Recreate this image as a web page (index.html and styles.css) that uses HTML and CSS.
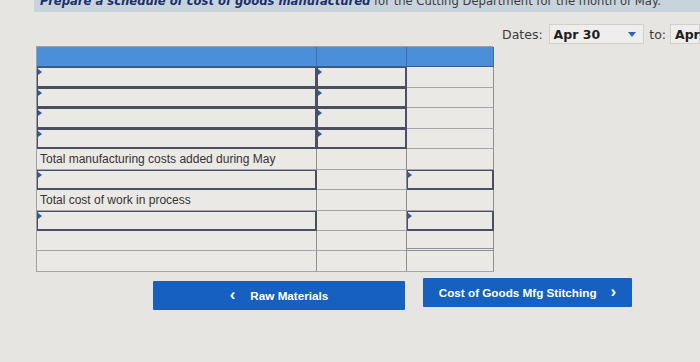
FILE: index.html
```html
<!DOCTYPE html>
<html>
<head>
<meta charset="utf-8">
<link rel="stylesheet" href="styles.css">
</head>
<body>
<div class="banner">
  <p class="prompt"><span class="em">Prepare a schedule of cost of goods manufactured</span> for the Cutting Department for the month of May.</p>
</div>
<div class="dates">
  <span class="lbl">Dates:</span>
  <div class="select"><span class="val">Apr 30</span><span class="arrow"></span></div>
  <span class="lbl to">to:</span>
  <div class="select cut"><span class="val">Apr 30</span></div>
</div>
<div class="sheet">
  <div class="c hd"></div><div class="c hd"></div><div class="c hd"></div>

  <div class="c in"></div><div class="c in"></div><div class="c"></div>
  <div class="c in"></div><div class="c in"></div><div class="c"></div>
  <div class="c in"></div><div class="c in"></div><div class="c"></div>
  <div class="c in"></div><div class="c in"></div><div class="c"></div>

  <div class="c lab">Total manufacturing costs added during May</div><div class="c"></div><div class="c"></div>
  <div class="c in"></div><div class="c"></div><div class="c in"></div>
  <div class="c lab">Total cost of work in process</div><div class="c"></div><div class="c"></div>
  <div class="c in"></div><div class="c"></div><div class="c in"></div>
  <div class="c"></div><div class="c"></div><div class="c dbl"></div>
  <div class="c"></div><div class="c"></div><div class="c"></div>
</div>
<div class="nav">
  <button class="btn prev"><span class="chev">&lsaquo;</span>Raw Materials</button>
  <button class="btn next">Cost of Goods Mfg Stitching<span class="chev">&rsaquo;</span></button>
</div>
</body>
</html>
```
FILE: styles.css
```css
html, body {
  margin: 0;
  padding: 0;
  background: #e7e5e2;
  width: 700px;
  height: 362px;
  overflow: hidden;
}

.banner {
  margin-left: 34px;
  height: 12px;
  background: #c8d4dc;
  overflow: hidden;
}

.prompt {
  margin: -7px 0 0 6px;
  font-family: "DejaVu Sans", Verdana, sans-serif;
  font-size: 11.6px;
  line-height: 16px;
  color: #3a3a3a;
  white-space: nowrap;
}

.prompt .em {
  font-weight: bold;
  font-style: italic;
  color: #1c2e6b;
}

.dates {
  display: flex;
  align-items: center;
  margin-top: 12px;
  margin-left: 502px;
  height: 20px;
  font-family: "DejaVu Sans", Verdana, sans-serif;
  font-size: 12.5px;
  color: #3a3a3a;
  white-space: nowrap;
}

.lbl { margin-right: 6px; }
.lbl.to { margin-left: 5px; margin-right: 4px; }

.select {
  display: flex;
  align-items: center;
  width: 110px;
  height: 20px;
  box-sizing: border-box;
  background: #efeeec;
  border: 1px solid #d2d0cd;
  padding-left: 4px;
}

.select .val {
  flex: 1;
  font-weight: bold;
  color: #1e1e1e;
}

.select .arrow {
  width: 0;
  height: 0;
  border-left: 4px solid transparent;
  border-right: 4px solid transparent;
  border-top: 5px solid #2f5fb0;
  margin-right: 7px;
}

.select.cut {
  width: 30px;
  flex: none;
}

.sheet {
  display: grid;
  grid-template-columns: 280px 90px 87px;
  grid-template-rows: repeat(11, 20.45px);
  margin-left: 36px;
  margin-top: 2px;
  width: 457px;
  border-top: 1px solid #9da0a5;
  border-left: 1px solid #9da0a5;
  box-sizing: border-box;
}

.c {
  border-right: 1px solid #8d9096;
  border-bottom: 1px solid #a3a5a9;
  background: #ebe9e6;
  position: relative;
  font-family: "Liberation Sans", Arial, sans-serif;
  font-size: 12px;
  color: #333;
}

.c.hd {
  background: #4b8ed9;
  border-right-color: #3d6fae;
  border-bottom-color: #3b5f8f;
}

.c.in {
  border-right: 2px solid #4a5061;
  border-bottom: 2px solid #4a5061;
  box-shadow: inset 1px 1px 0 #4a5061;
}

.c.in::before {
  content: "";
  position: absolute;
  left: 1px;
  top: 2px;
  border-top: 3px solid transparent;
  border-bottom: 3px solid transparent;
  border-left: 4px solid #2c5aa0;
}

.c.lab {
  display: flex;
  align-items: center;
  padding-left: 3px;
}

.c.dbl {
  border-bottom: 3px double #8d9096;
}

.nav {
  display: flex;
  align-items: flex-start;
  margin-top: 6px;
  margin-left: 153px;
}

.btn {
  display: flex;
  align-items: center;
  justify-content: center;
  border: none;
  background: #1660c2;
  color: #fff;
  font-family: "Liberation Sans", Arial, sans-serif;
  font-weight: bold;
  font-size: 11.7px;
  height: 29px;
  padding: 0;
  border-radius: 1px;
}

.btn.prev {
  width: 252px;
  margin-top: 3px;
}

.btn.next {
  width: 209px;
  margin-left: 18px;
}

.chev {
  font-size: 17px;
  font-weight: bold;
  line-height: 1;
  margin-top: -2px;
}

.prev .chev { margin-right: 15px; }
.next .chev { margin-left: 14px; }
```
